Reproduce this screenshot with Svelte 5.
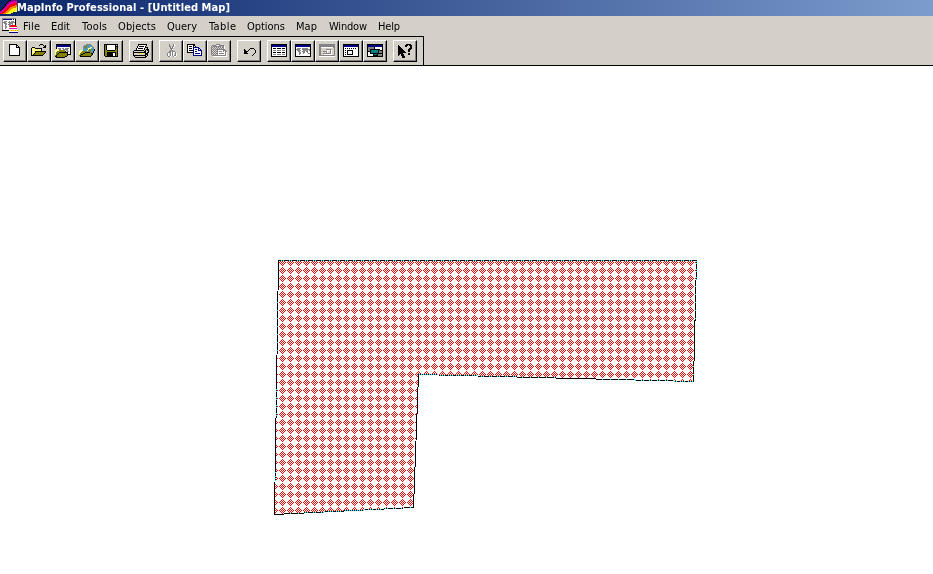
<script>
  const colors = {
    k: '#000000', w: '#ffffff', y: '#ffff00', o: '#848200', n: '#000084', g: '#848284',
    s: '#d4d0c8', t: '#008284', b: '#4a9ac8', l: '#ffff9c', r: '#ff0000', m: '#e000b0',
    a: '#ff8200', p: '#840084', d: '#424142', e: '#c6c3c6'
  };
  function cells(rows) {
    const out = [];
    rows.forEach((row, y) => {
      let x = 0;
      while (x < row.length) {
        let end = x + 1;
        while (end < row.length && row[end] === row[x]) end++;
        if (row[x] !== '.') out.push({ x, y, w: end - x, c: colors[row[x]] });
        x = end;
      }
    });
    return out;
  }

  const logo = [
    '.........kkpppppp', '........kppppmmmm', '.......kppmmmmmmm', '......kppmmmmrrrr',
    '.....kppmmmrrrrrr', '.....kpmmrrrrrraa', '....kpmmrrrraaaaa', '...kpmmrrraaaaaay',
    '..kpmmrrraaaayyyy', '.kpmmrrraaayyyyyy', 'kpmmrrraaayyyyyyy', 'pmmrrraaayyyyylll',
    'mmrrraaayyyyy....', 'rrraaayyyyy......'
  ];
  const mapDoc = [
    'gggggggggggggg..', 'gnnnnnnnnnwnwk..', 'gwwwwwwwwwwwwk..', 'gwgggwwgwgggwk..',
    'ggggwwgggggggk..', 'gwgggwwggggwwk..', 'gwwggwgggwgwwk..', 'gwwgwwwggrrrrr..',
    'gwwggwwgrrrrrrr.', 'gwwggwwwwwwwwww.', 'gwwgwwwmmmmmmmm.', 'gwwwwwwwwwwwwwww',
    'kkkkkkkyyayayaya', '.......wwwwwwwww', '.......nnnnnnnnn'
  ];
  const windowTop = ['kkkkkkkkkkkkkkkk', 'knnnnnnnnnnnnnnk', 'knnnnnnnnnnnnnnk'];

  const groups = [
    [
      { name: 'New', rows: ['', '..kkkkkkkk', '..kwwwwwwkk', '..kwwwwwwkwk', '..kwwwwwwkkkk', '..kwwwwwwwwwk', '..kwwwwwwwwwk', '..kwwwwwwwwwk', '..kwwwwwwwwwk', '..kwwwwwwwwwk', '..kwwwwwwwwwk', '..kwwwwwwwwwk', '..kkkkkkkkkkk'] },
      { name: 'Open', rows: ['', '.........kkk', '........k...k.k', '.............kk', '.kkk........kkk', 'kywykkkkkkk', 'kwywywywywk', 'kywywywywyk', 'kwwykkkkkkkkkkk', 'kywykoooooooook', 'kwykoooooooook', 'kykoooooooook', 'kkkkkkkkkkkk'] },
      { name: 'Open workspace', rows: ['', '.kkkkkkkkkkkkkkk', '.knnnnnnnnnnnnnk', '.knnnnnnnnnnnnnk', '.kwwwwwwwwwwwwwk', '.kwgggwggwggggwk', '.lllggwwgggggwwk', 'lllloooooowggwwk', 'llooooooookwggwk', 'loookkkkkkkkkwwk', 'lookooooooookwwk', 'lokoooooooookkkk', 'okooooooooook', 'kkooooooookk', '.kkkkkkkkk'] },
      { name: 'Open web table', rows: ['', '.......ggggg', '.....gbbobbbg', '....gboobbbbbg', '....booobbbllbg', '....bbobblllbbg', '....bbbbbloobbbk', '.lllbbbblooobbbk', 'lllooooobboobbk', 'llooookkkkkobbk', 'loookkooooookk', 'lokkoooooooook', 'okooooooooook', '.kkkkkkkkkkk'] },
      { name: 'Save', rows: ['', '.kkkkkkkkkkkkkk', '.kokwwwwwwwwksk', '.kokwwwwwwwwkkk', '.kokwwwwwwwwkok', '.kokwwwwwwwwkok', '.kokwwwwwwwwkok', '.kookkkkkkkkook', '.kooooooooooook', '.kookkkkkkkkkok', '.kookkkkkkwwkok', '.kookkkkkkwwkok', '.kookkkkkkwwkok', '..kkkkkkkkkkkkk'] }
    ],
    [{ name: 'Print', rows: ['', '.....kkkkkkkkk', '.....kwwwwwwwk', '....kwkkkkkwk', '....kwwwwwwwkkk', '...kwkkkkkwkssk', '...kwwwwwwwkskkk', '.kkkkkkkkkkskskk', 'ksssssssssskkssk', 'kkkkkkkkkkkkkskk', 'kssssssyyysskkk', 'kssssssssssskkk', 'kkkkkkkkkkkkksk', '.ksssssssssskk', '..kkkkkkkkkkk'] }],
    [
      { name: 'Cut', rows: ['', '......g...gw', '......g...gw', '......gg.ggw', '.......g.gw', '.......ggg', '........gw', '.......ggg', '......gg.ggg', '.....gggwgwwg', '....gw.gwgw.gw', '....gw.gwgw.gw', '....gw.gwgwggw', '.....ggw..gww'] },
      { name: 'Copy', rows: ['', 'kkkkkkkk', 'kwwwwwkk', 'kwkkkwkwk', 'kwwwwwnnnnnn', 'kwkkkwnwwwwnn', 'kwwwwwnwnnwnwn', 'kwkkkknwwwwnnnn', 'kwwwwwnwnnwwwwn', 'kkkkkknwwwwwwwn', '......nwnnnnnwn', '......nwwwwwwwn', '......nnnnnnnnn'] },
      { name: 'Paste', rows: ['', '.....gggg', '.ggggswwggggg', 'gsggggggggsggw', 'ggsgsgsgsgsggw', 'gsgsgsgsgsgsgw', 'ggsgsggggggggg', 'gsgsgsgwwwwwggg', 'ggsgsggwgggwgwgg', 'gsgsgsgwwwwwwwgw', 'ggsgsggwgggggwgw', 'gsgsgsgwwwwwwwgw', '.ggggggggggggggw', '..wwwwwwwwwwwwww'] }
    ],
    [{ name: 'Undo', rows: ['', '', '', '', '', '.........kkkk', '...k....k....k', '...kk..k......k', '...kkkk.......k', '...kkk........k', '...kkkk......k', '............k', '...........k'] }],
    [
      { name: 'New browser', rows: ['', ...windowTop, 'kwwwwwwwwwwwwwwk', 'kwkkkwkkkkwkkkwk', 'kwwwwwwwwwwwwwwk', 'kwgggwggggwgggwk', 'kwwwwwwwwwwwwwwk', 'kwkkkwkkkkwkkkwk', 'kwwwwwwwwwwwwwwk', 'kwgggwggggwgggwk', 'kwwwwwwwwwwwwwwk', 'kkkkkkkkkkkkkkkk'] },
      { name: 'New mapper', rows: ['', ...windowTop, 'kwwwwwwwwwwwwwwk', 'kwggggwggggggwwk', 'kggggwwggggggggk', 'kwggggwwgggggwgk', 'kwwggwwgggwggwwk', 'kwwwggwwggwwgwwk', 'kwwwggwwgwwwwggk', 'kwwwgwwwwwwwwwwk', 'kwwwwwwwwwwwwwwk', 'kkkkkkkkkkkkkkkk'] },
      { name: 'New grapher', rows: ['', 'gggggggggggggggg', 'gggggggggggggggg', 'gggggggggggggggg', 'ggwwwwwwwwwwwwgg', 'ggsssssssssssssg', 'ggsssssgggggsssg', 'ggsssssswwwgwssg', 'ggssggggwssgwssg', 'ggsssswgwssgwssg', 'ggssggggggggwssg', 'ggssswwwwwwwwssg', 'gggggggggggggggg', 'wwwwwwwwwwwwwwww'] },
      { name: 'New layout', rows: ['', ...windowTop, 'kwwwwwwwwwwwwwwk', 'kwkwkwkwkwkwkwwk', 'kwwwwwwwwwwwwwwk', 'kwkwkkkkkkwwwwwk', 'kwwwkwwwwkwwwwwk', 'kwkwkwwwwkwwwwwk', 'kwwwkwwwwkwwwwwk', 'kwkwkkkkkkwwwwwk', 'kwwwwwwwwwwwwwwk', 'kkkkkkkkkkkkkkkk'] },
      { name: 'New redistricter', rows: ['', ...windowTop, 'kggggggkwwwwwwwk', 'kggggggkwwwwwwwk', 'kggkkkkkkkkkkwwk', 'kggktttttttktkkk', 'kkkktttttttkgggk', 'kwwktttttttkgggk', 'kwwkkkkkkkkkkkkk', 'kwwwwwktttkggggk', 'kwwwwwkkkkkggggk', 'kkkkkkkkkkkkkkkk'] }
    ],
    [{ name: 'Context help', rows: ['', '.........kkkkk', '.k......kkk.kkk', '.kk.....kk...kk', '.kkk.........kk', '.kkkk.......kkk', '.kkkkk.....kkk', '.kkkkkk....kk', '.kkkkkkk...kk', '.kkkkkkkk', '.kkkkk.....kk', '.kk.kkk....kk', '.k..kkk', '.....kkk', '.....kkk'] }]
  ];

  const menus = [
    ['File', 17, 28], ['Edit', 19, 31], ['Tools', 25, 36], ['Objects', 38, 49], ['Query', 30, 42],
    ['Table', 27, 38], ['Options', 38, 49], ['Map', 21, 33], ['Window', 38, 49], ['Help', 22, 30]
  ];
</script>

{#snippet bitmap(rows, width, height)}
  <svg class="bitmap" {width} {height} viewBox="0 0 {width} {height}" aria-hidden="true">
    {#each cells(rows) as c}<rect x={c.x} y={c.y} width={c.w} height="1" fill={c.c} />{/each}
  </svg>
{/snippet}

<div class="app">
  <header class="title">
    {@render bitmap(logo, 17, 14)}
    <svg class="caption" width="220" height="16"><text x="0" y="11" textLength="213">MapInfo Professional - [Untitled Map]</text></svg>
  </header>
  <nav class="menu">
    <div class="doc">{@render bitmap(mapDoc, 16, 16)}</div>
    {#each menus as [name, width, slot]}
      <svg class="item" width={slot} height="20"><text x="0" y="14" textLength={width}>{name}</text></svg>
    {/each}
  </nav>
  <div class="toolrow">
    <div class="toolbar">
      {#each groups as group}
        <div class="group">
          {#each group as tool}
            <button aria-label={tool.name}>{@render bitmap(tool.rows, 16, 16)}</button>
          {/each}
        </div>
      {/each}
    </div>
  </div>
  <main>
    <svg width="933" height="508" viewBox="0 66 933 508" shape-rendering="crispEdges">
      <defs>
        <pattern id="hatch" x="278" y="266" width="8" height="8" patternUnits="userSpaceOnUse">
          {#each [[4], [3, 5], [2, 4, 6], [1, 3, 5, 7], [2, 4, 6], [3, 5], [4]] as xs, i}
            {#each xs as x}<rect {x} y={i + 1} width="1" height="1" fill="#00ffff" />{/each}
          {/each}
        </pattern>
      </defs>
      <rect y="66" width="933" height="508" fill="#fff" />
      <polygon points="278.5,260.5 696.5,260.5 693.5,381.5 418.5,374.5 413.5,507.5 274.5,514.5" fill="none" stroke="#000" />
      <polygon class="selection" points="278,260 697,260 694,382 418,375 413,508 275,515" fill="url(#hatch)" />
    </svg>
  </main>
</div>

<style>
  :global(body) { margin: 0; overflow: hidden; }
  .app { width: 933px; height: 574px; display: flex; flex-direction: column; background: #fff; font-family: "DejaVu Sans Condensed", "DejaVu Sans", sans-serif; font-size: 11px; }
  svg { display: block; flex: none; }
  .bitmap { shape-rendering: crispEdges; }
  .title { height: 16px; display: flex; background: linear-gradient(90deg, #0a246a, #7c9ccd); }
  .caption text { fill: #fff; font-weight: bold; }
  .menu { height: 20px; display: flex; background: #d4d0c8; }
  .doc { width: 21px; padding: 2px 0 0 2px; }
  .item text { fill: #000; }
  .toolrow { height: 30px; box-sizing: border-box; background: #d4d0c8; border-bottom: 1px solid #000; }
  .toolbar { width: 424px; height: 29px; box-sizing: border-box; display: flex; gap: 6px; padding: 3px 0 0 3px; border-top: 1px solid #000; border-right: 1px solid #000; }
  .group { display: flex; }
  button { width: 24px; height: 22px; box-sizing: border-box; padding: 2px 0 0 3px; border: 1px solid; border-color: #fff #000 #000 #fff; box-shadow: inset -1px -1px #808080; background: #d4d0c8; display: flex; }
  .selection { mix-blend-mode: difference; }
</style>
